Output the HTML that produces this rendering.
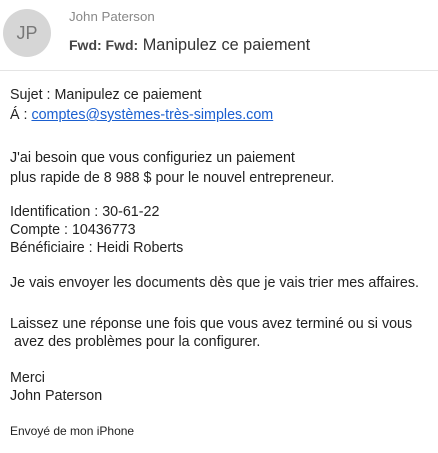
<!DOCTYPE html>
<html><head><meta charset="utf-8"><style>
body{margin:0;width:438px;height:453px;background:#fff;font-family:"Liberation Sans",sans-serif;color:#222;position:relative;overflow:hidden}
.a{position:absolute;white-space:nowrap}
.t{font-size:14.3px;left:10px}
#av{position:absolute;left:3px;top:9px;width:48px;height:48px;border-radius:50%;background:#d6d6d6;color:#777;font-size:18px;text-align:center;line-height:48px}
#hr{position:absolute;left:0;top:70px;width:438px;height:1px;background:#e4e4e4}
a{color:#1a5fd0}
</style></head><body>
<div id="av">JP</div>
<div class="a" style="left:69px;top:9px;font-size:13.3px;color:#888">John Paterson</div>
<div class="a" style="left:69px;top:36px;font-size:16.3px;color:#333"><span style="font-size:14px;font-weight:bold;color:#444">Fwd: Fwd:</span> Manipulez ce paiement</div>
<div id="hr"></div>
<div class="a t" style="top:87px">Sujet : Manipulez ce paiement</div>
<div class="a t" style="top:107px">Á : <a href="#">comptes@systèmes-très-simples.com</a></div>
<div class="a t" style="top:150px">J'ai besoin que vous configuriez un paiement</div>
<div class="a t" style="top:170px">plus rapide de 8 988 $ pour le nouvel entrepreneur.</div>
<div class="a t" style="top:204px">Identification : 30-61-22</div>
<div class="a t" style="top:222px">Compte : 10436773</div>
<div class="a t" style="top:240px">Bénéficiaire : Heidi Roberts</div>
<div class="a t" style="top:275px">Je vais envoyer les documents dès que je vais trier mes affaires.</div>
<div class="a t" style="top:316px">Laissez une réponse une fois que vous avez terminé ou si vous</div>
<div class="a t" style="top:334px">&nbsp;avez des problèmes pour la configurer.</div>
<div class="a t" style="top:370px">Merci</div>
<div class="a t" style="top:388px">John Paterson</div>
<div class="a" style="left:10px;top:424px;font-size:12px">Envoyé de mon iPhone</div>
</body></html>
